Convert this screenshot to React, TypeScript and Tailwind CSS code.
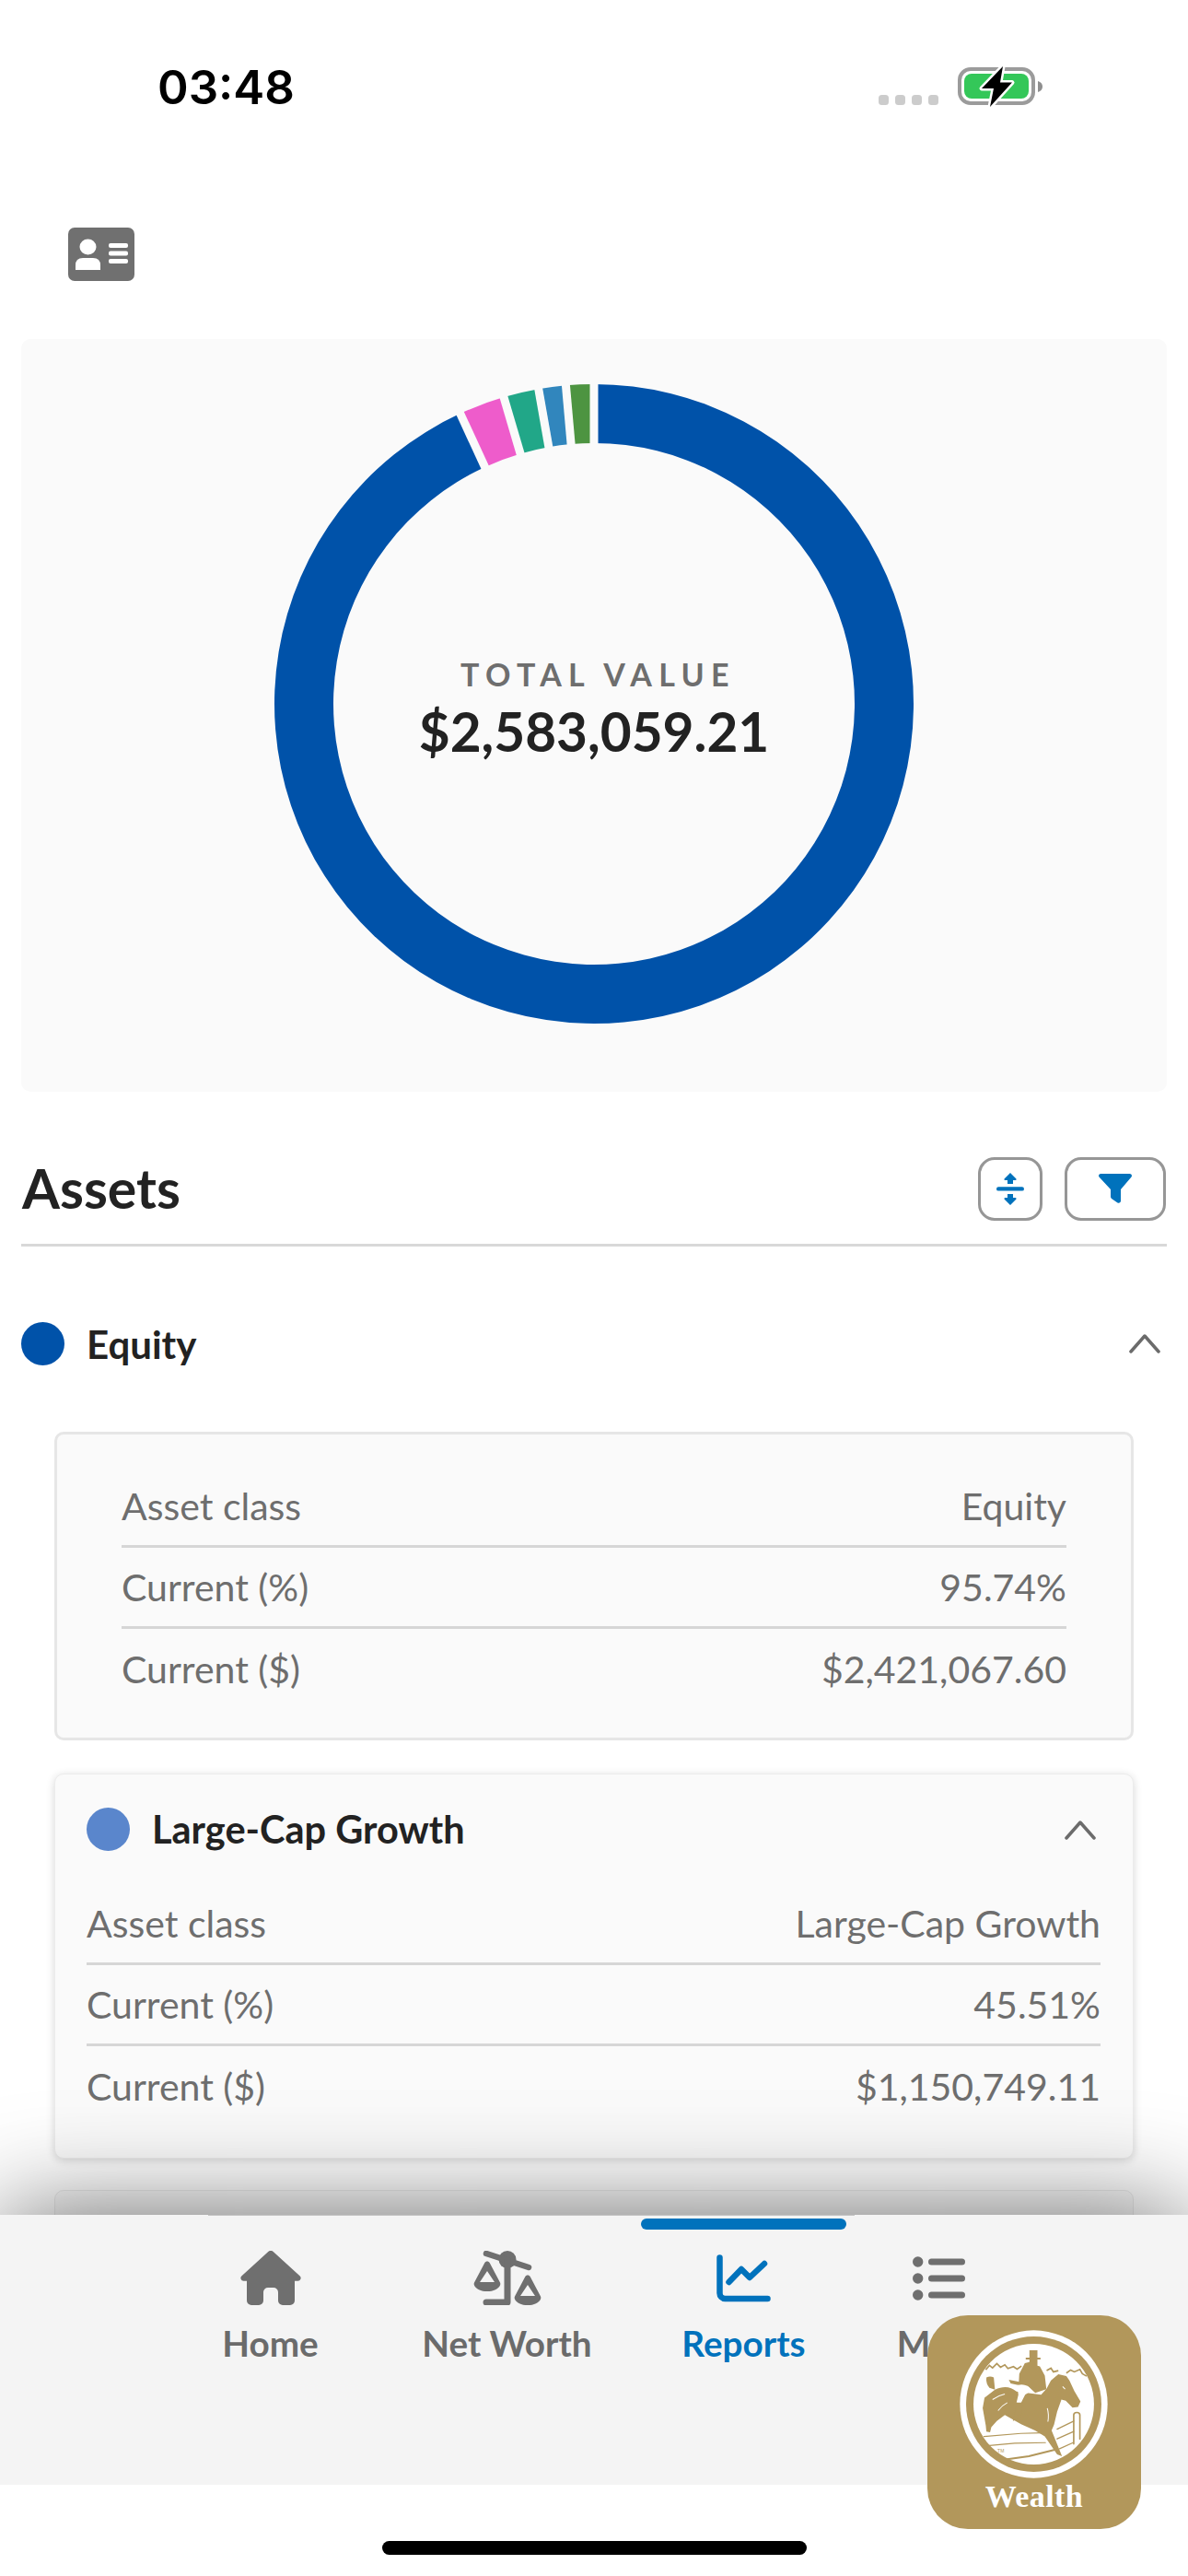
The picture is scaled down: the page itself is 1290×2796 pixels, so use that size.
import React from "react";

function pt(r: number, a: number) {
  const t = (a * Math.PI) / 180;
  return [350 + r * Math.sin(t), 350 - r * Math.cos(t)];
}
function arc(a0: number, a1: number, ro = 347, ri = 283) {
  const [x0, y0] = pt(ro, a0);
  const [x1, y1] = pt(ro, a1);
  const [x2, y2] = pt(ri, a1);
  const [x3, y3] = pt(ri, a0);
  const l = a1 - a0 > 180 ? 1 : 0;
  return `M${x0} ${y0}A${ro} ${ro} 0 ${l} 1 ${x1} ${y1}L${x2} ${y2}A${ri} ${ri} 0 ${l} 0 ${x3} ${y3}Z`;
}
const segments = [
  { from: 0, to: 335.25, color: "#0052a9" },
  { from: 335.25, to: 343.6, color: "#ee5ccb" },
  { from: 343.6, to: 350, color: "#21a788" },
  { from: 350, to: 354.95, color: "#3186bd" },
  { from: 354.95, to: 360, color: "#4d9441" },
];

function Donut() {
  return (
    <svg width="700" height="700" viewBox="0 0 700 700" className="[grid-area:1/1]">
      {segments.map((s) => (
        <path key={s.from} d={arc(s.from, s.to)} fill={s.color} />
      ))}
      {segments.map((s) => {
        const [x0, y0] = pt(280, s.from);
        const [x1, y1] = pt(350, s.from);
        return <line key={s.from} x1={x0} y1={y0} x2={x1} y2={y1} stroke="#fafafa" strokeWidth="9" />;
      })}
    </svg>
  );
}

function Chevron() {
  return (
    <svg width="34" height="22" viewBox="0 0 34 22" fill="none">
      <path d="M2 20L17 3L32 20" stroke="#6b6b6b" strokeWidth="3.5" strokeLinecap="round" strokeLinejoin="round" />
    </svg>
  );
}

function Rows({ rows }: { rows: [string, string][] }) {
  return (
    <div className="flex flex-col">
      {rows.map(([k, v], i) => (
        <div
          key={k}
          className={
            i < rows.length - 1
              ? "h-[88px] flex items-center justify-between border-b-[3px] border-[#d6d6d6] text-[41px] text-[#6e6e6e]"
              : "h-[88px] flex items-center justify-between text-[41px] text-[#6e6e6e]"
          }
        >
          <span>{k}</span>
          <span>{v}</span>
        </div>
      ))}
    </div>
  );
}

function HomeIcon() {
  return (
    <svg width="66" height="59" viewBox="0 0 66 59" fill="#6f6f6f">
      <path d="M30 1.2a4.4 4.4 0 0 1 6 0l28.5 26a3.2 3.2 0 0 1-2 5.6H59v21.2a5 5 0 0 1-5 5H46a5 5 0 0 1-5-5V45a5 5 0 0 0-5-5h-6a5 5 0 0 0-5 5v9a5 5 0 0 1-5 5H12a5 5 0 0 1-5-5V32.8H3.5a3.2 3.2 0 0 1-2-5.6Z" />
    </svg>
  );
}

function ScaleIcon() {
  return (
    <svg width="74" height="59" viewBox="0 0 74 59" fill="none">
      <circle cx="37" cy="9.5" r="9.5" fill="#6f6f6f" />
      <path d="M14 3L60 18" stroke="#6f6f6f" strokeWidth="6.5" strokeLinecap="round" />
      <path d="M37 10V56H14" stroke="#6f6f6f" strokeWidth="7" strokeLinecap="round" strokeLinejoin="round" />
      <path fillRule="evenodd" clipRule="evenodd" fill="#6f6f6f" d="M15 11.5c1.2 0 2.2.7 2.8 1.7L29 34.5c.4.8.4 1.6.2 2.4C27.4 41.6 21.8 44 15 44S2.6 41.6.8 36.9c-.3-.8-.2-1.7.2-2.4L12.2 13.2c.6-1 1.6-1.7 2.8-1.7ZM15 22L7 34h16Z" />
      <path fillRule="evenodd" clipRule="evenodd" fill="#6f6f6f" d="M59 26.5c1.2 0 2.2.7 2.8 1.7L73 49.5c.4.8.4 1.6.2 2.4C71.4 56.6 65.8 59 59 59s-12.4-2.4-14.2-7.1c-.3-.8-.2-1.7.2-2.4l11.2-21.3c.6-1 1.6-1.7 2.8-1.7ZM59 37l-8 12h16Z" />
    </svg>
  );
}

function ChartIcon() {
  return (
    <svg width="59" height="52" viewBox="0 0 59 52" fill="none" stroke="#0072bc" strokeWidth="6.5" strokeLinecap="round" strokeLinejoin="round">
      <path d="M3.5 3.5V42a6 6 0 0 0 6 6H55.5" />
      <path d="M13.5 30L27 16l9 9L52 10" />
    </svg>
  );
}

function ListIcon() {
  return (
    <svg width="58" height="48" viewBox="0 0 58 48" fill="#6f6f6f">
      <circle cx="5.7" cy="6" r="5.7" />
      <circle cx="5.7" cy="24" r="5.7" />
      <circle cx="5.7" cy="42" r="5.7" />
      <rect x="17" y="2.5" width="40" height="7" rx="3.5" />
      <rect x="17" y="20.5" width="40" height="7" rx="3.5" />
      <rect x="17" y="38.5" width="40" height="7" rx="3.5" />
    </svg>
  );
}

function Tab({ label, active, icon, narrow }: { label: string; active?: boolean; icon: React.ReactNode; narrow?: boolean }) {
  return (
    <div className={narrow ? "w-[168px] flex flex-col items-center" : "w-[257px] flex flex-col items-center"}>
      <div className={active ? "mt-[4px] w-[223px] h-[12px] rounded-full bg-[#0072bc]" : "mt-[4px] w-[100px] h-[12px]"} />
      <div className="mt-[23px] h-[59px] flex items-center justify-center">{icon}</div>
      <div className={active ? "mt-[19px] text-[38.7px] leading-[44px] font-bold text-[#0072bc]" : "mt-[19px] text-[38.7px] leading-[44px] font-bold text-[#6b6b6b]"}>
        {label}
      </div>
    </div>
  );
}

function Emblem() {
  const g = "#b2975b";
  return (
    <svg width="172" height="172" viewBox="-10 -10 515 515">
      <circle cx="246" cy="237" r="240" fill="#fff" />
      <circle cx="246" cy="237" r="220" fill={g} />
      <circle cx="246" cy="237" r="196" fill="#fff" />
      {/* horizon */}
      <path d="M90 125l12-14 10 8 14-14 12 12 14-8 10 12 18-6 12 8 14-10M288 128l14-8 8 12 16-4M352 136l14-10 12 6 18-8 8 14 14 8" stroke={g} strokeWidth="5" fill="none" />
      {/* fence */}
      <g stroke={g} fill="none" strokeLinecap="round">
        <path d="M84 342l120-10 70-2" strokeWidth="3.5" />
        <path d="M94 372l90-8 100-2" strokeWidth="3.5" />
        <path d="M160 416l70-10 90-22" strokeWidth="6" />
        <path d="M322 318l54-26M322 350l54-24M330 382l44-20" strokeWidth="4" />
        <path d="M376 366V272q0-8 10-8t10 8V350" strokeWidth="5" />
      </g>
      {/* tail */}
      <path d="M92 150q12-6 24 0l4 40-18-6q-12-14-10-34Z" fill={g} />
      <path d="M165 158l42 8 2 12-38-8Z" fill={g} />
      {/* horse */}
      <path
        d="M120 190C145 178 170 178 190 196L270 206 288 186 302 160 326 140 352 146 362 160 378 194 398 228 390 246 372 248 350 226 336 222 322 262 312 304 304 322 338 406 322 400 282 342 250 322 205 302 152 272 126 292 108 312 104 328 92 326 90 306 80 250 86 216Z"
        fill={g}
      />
      <path d="M112 222q20-14 40-18M130 258q14-18 30-26M290 250q6 20 2 44M340 180l8 8" stroke="#fff" strokeWidth="3" fill="none" />
      {/* rider */}
      <path d="M232 62h26v24h10v6h-10v20l8 2 16 30 5 44-36 12-22-20-32-4 2-38 18-34 15-4V92h-12v-6h12Z" fill={g} />
      <path d="M192 176q18-6 34 2l14 14-22 14-14 28-14-2 6-26Z" fill="#fff" />
      <path d="M190 232h20l-6 50-26 10 6-24Z" fill={g} />
      <text x="128" y="394" fontSize="15" fill={g} fontFamily="Liberation Sans, sans-serif">TM</text>
    </svg>
  );
}

export default function App() {
  return (
    <div className="relative w-[1290px] h-[2796px] bg-white flex flex-col overflow-hidden font-[Lato,sans-serif]">
      {/* Header */}
      <header className="h-[368px] shrink-0 flex flex-col">
        <div className="h-[247px] shrink-0 flex justify-between pt-[63px] pl-[171px] pr-[158px]">
          <div className="font-[Inter,sans-serif] text-[51px] leading-[64px] font-semibold text-black">03:48</div>
          <div className="flex gap-[21px] pt-[10px] h-[52px]">
            <div className="flex items-end gap-[7px] h-[41px]">
              <span className="w-[11px] h-[11px] rounded-[3.5px] bg-[#cccccc]" />
              <span className="w-[11px] h-[11px] rounded-[3.5px] bg-[#cccccc]" />
              <span className="w-[11px] h-[11px] rounded-[3.5px] bg-[#cccccc]" />
              <span className="w-[11px] h-[11px] rounded-[3.5px] bg-[#cccccc]" />
            </div>
            <svg width="92" height="44" viewBox="0 0 92 44" className="overflow-visible">
              <rect x="2" y="2" width="80" height="37" rx="12" fill="none" stroke="#9b9b9b" strokeWidth="4" />
              <rect x="7" y="7" width="70" height="27" rx="8" fill="#34c759" />
              <path d="M87 15q5 1.5 5 6t-5 6Z" fill="#8f8f8f" />
              <path d="M49 -1L26 23H39L35 43L59 16.500H46Z" fill="#000" stroke="#fff" strokeWidth="5" strokeLinejoin="round" paintOrder="stroke" />
            </svg>
          </div>
        </div>
        <div className="pl-[74px]">
          <svg width="72" height="58" viewBox="0 0 72 58">
            <rect width="72" height="58" rx="7" fill="#707070" />
            <ellipse cx="21.5" cy="21" rx="9" ry="8.5" fill="#fff" />
            <path d="M8 46v-5q0-8 8-8h11q8 0 8 8v5Z" fill="#fff" />
            <rect x="44" y="17" width="21" height="5" rx="2" fill="#fff" />
            <rect x="44" y="25.5" width="21" height="5" rx="2" fill="#fff" />
            <rect x="44" y="34" width="21" height="5" rx="2" fill="#fff" />
          </svg>
        </div>
      </header>

      {/* Scrolling content */}
      <main className="flex-1 min-h-0 overflow-hidden px-[23px]">
        <section className="h-[817px] bg-[#fafafa] rounded-[10px] flex justify-center pt-[46px]">
          <div className="grid place-items-center h-[700px]">
            <Donut />
            <div className="[grid-area:1/1] flex flex-col items-center pt-[12px]">
              <div className="pl-[9px] text-[34px] leading-[40px] font-bold tracking-[7.3px] text-[#6e6e6e] uppercase">Total Value</div>
              <div className="mt-[6px] text-[58.5px] leading-[70px] font-bold text-[#222222]">$2,583,059.21</div>
            </div>
          </div>
        </section>

        <div className="h-[168px] flex items-end border-b-[3px] border-[#d8d8d8]">
          <div className="flex-1 flex items-center justify-between h-[140px] pr-[1px] mb-[-10px]">
            <h2 className="pl-[1px] text-[59px] leading-[68px] font-bold text-[#222222]">Assets</h2>
            <div className="flex gap-[24px]">
              <button className="w-[70px] h-[69px] rounded-[18px] border-[3px] border-[#969696] flex items-center justify-center">
                <svg width="30" height="35" viewBox="0 0 30 35" fill="#0072bc">
                  <path d="M15 0l6.5 6.5q.5 1.5-1 1.5H18v4h-6V8H9.5q-1.5 0-1-1.5Z" />
                  <rect x="0" y="15.2" width="30" height="4.4" rx="2.2" />
                  <path d="M15 35l6.5-6.500q.5-1.500-1-1.500H18v-4h-6v4H9.500q-1.500 0-1 1.500Z" />
                </svg>
              </button>
              <button className="w-[110px] h-[69px] rounded-[18px] border-[3px] border-[#969696] flex items-center justify-center">
                <svg width="36" height="32" viewBox="0 0 36 32" fill="#0072bc">
                  <path d="M2 0h32q3 1 1.5 3.500L24 17v13q-1 2.500-3.500 1.500L14 27q-1-1-1-2v-8L.5 3.500Q-1 1 2 0Z" />
                </svg>
              </button>
            </div>
          </div>
        </div>

        <div className="mt-[45px] h-[120px] flex items-center justify-between pr-[7px]">
          <div className="flex items-center gap-[24px]">
            <span className="w-[47px] h-[47px] rounded-full bg-[#0052a9]" />
            <span className="mt-[3px] text-[42px] font-bold text-[#222222]">Equity</span>
          </div>
          <Chevron />
        </div>

        <div className="mt-[36px] mx-[36px] border-[3px] border-[#e6e6e6] rounded-[10px] bg-[#fafafa] pt-[35px] pb-[30px] px-[70px]">
          <Rows rows={[["Asset class", "Equity"], ["Current (%)", "95.74%"], ["Current ($)", "$2,421,067.60"]]} />
        </div>

        <div className="mt-[36px] mx-[36px] rounded-[10px] bg-[#fafafa] border border-[#ececec] shadow-[0_2px_10px_rgba(0,0,0,0.16)] pl-[34px] pr-[35px] pb-[33px]">
          <div className="h-[119px] flex items-center justify-between pr-[5px]">
            <div className="flex items-center gap-[24px]">
              <span className="w-[47px] h-[47px] rounded-full bg-[#5a86cc]" />
              <span className="text-[41.5px] font-bold text-[#222222]">Large-Cap Growth</span>
            </div>
            <Chevron />
          </div>
          <Rows rows={[["Asset class", "Large-Cap Growth"], ["Current (%)", "45.51%"], ["Current ($)", "$1,150,749.11"]]} />
        </div>

        <div className="mt-[34px] mx-[36px] h-[200px] rounded-[10px] bg-[#fafafa] border border-[#ececec]" />
      </main>

      {/* Tab bar */}
      <nav className="relative z-10 h-[293px] shrink-0 bg-[#f4f4f4] shadow-[0_0_115px_rgba(0,0,0,0.58)] flex pl-[165px]">
        <div className="absolute left-[226px] top-0 w-[702px] h-[1px] bg-[#c4c4c4]" />
        <Tab label="Home" icon={<HomeIcon />} />
        <Tab label="Net Worth" icon={<ScaleIcon />} />
        <Tab label="Reports" active icon={<ChartIcon />} />
        <Tab label="More" narrow icon={<ListIcon />} />
      </nav>

      {/* Home indicator */}
      <div className="relative z-10 h-[99px] shrink-0 bg-white flex justify-center pt-[61px]">
        <div className="w-[461px] h-[15px] rounded-full bg-black" />
      </div>

      {/* Floating badge */}
      <div className="absolute z-20 left-[1007px] top-[2513px] w-[232px] h-[232px] rounded-[44px] bg-[#b2975b] flex flex-col items-center pt-[14px]">
        <Emblem />
        <div className="mt-[-10px] font-['Liberation_Serif',serif] font-bold text-[34px] leading-[42px] text-white tracking-[0.4px]">Wealth</div>
      </div>
    </div>
  );
}
